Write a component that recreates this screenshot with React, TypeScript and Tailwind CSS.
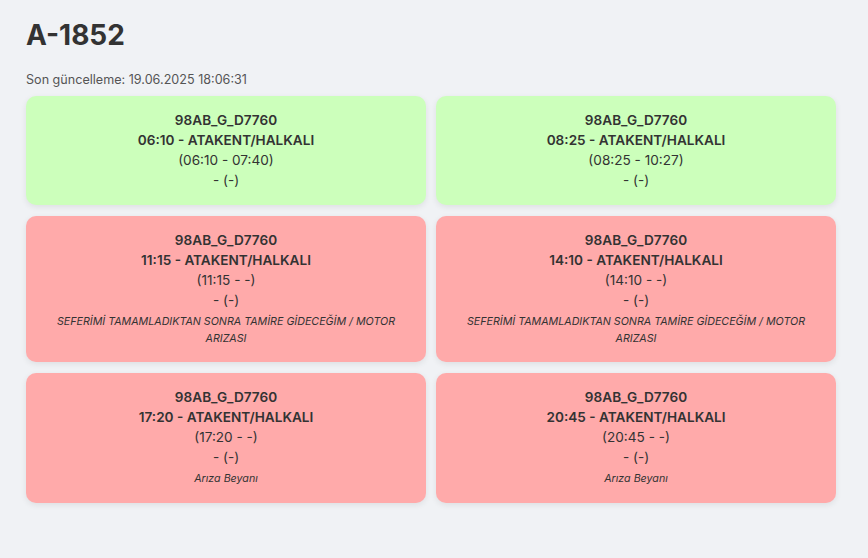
const trips = [
  { time: '06:10', range: '(06:10 - 07:40)', ok: true, note: '' },
  { time: '08:25', range: '(08:25 - 10:27)', ok: true, note: '' },
  { time: '11:15', range: '(11:15 - -)', ok: false, note: 'SEFERİMİ TAMAMLADIKTAN SONRA TAMİRE GİDECEĞİM / MOTOR ARIZASI' },
  { time: '14:10', range: '(14:10 - -)', ok: false, note: 'SEFERİMİ TAMAMLADIKTAN SONRA TAMİRE GİDECEĞİM / MOTOR ARIZASI' },
  { time: '17:20', range: '(17:20 - -)', ok: false, note: 'Arıza Beyanı' },
  { time: '20:45', range: '(20:45 - -)', ok: false, note: 'Arıza Beyanı' },
];

export default function App() {
  return (
    <div className="min-h-[558px] bg-[#f0f2f5] px-[26px] pt-[15px] text-[#333] font-['Inter',sans-serif]">
      <h1 className="text-[28px] leading-[40px] font-bold text-[#333]">A-1852</h1>
      <p className="mt-[16px] text-[12.6px] leading-[18px] text-[#555]">Son güncelleme: 19.06.2025 18:06:31</p>
      <div className="mt-[7px] grid w-[810px] grid-cols-2 gap-x-[10px] gap-y-[11px]">
        {trips.map((t, i) => (
          <div
            key={i}
            className={`rounded-[10px] px-3 pt-[14px] pb-[15px] text-center text-[13.6px] leading-[20px] shadow-[0_2px_6px_rgba(0,0,0,0.08)] ${
              t.ok ? 'bg-[#ccffbb]' : 'bg-[#ffaaaa]'
            }`}
          >
            <div className="font-semibold">98AB_G_D7760</div>
            <div className="font-semibold">{t.time} - ATAKENT/HALKALI</div>
            <div>{t.range}</div>
            <div>- (-)</div>
            {t.note && (
              <div className="mt-[4px] text-[10.7px] leading-[16.5px] italic">{t.note}</div>
            )}
          </div>
        ))}
      </div>
    </div>
  );
}
